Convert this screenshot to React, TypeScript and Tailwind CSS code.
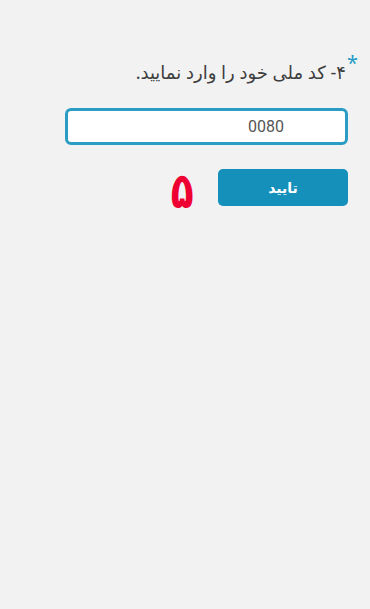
export default function App() {
  return (
    <div
      dir="rtl"
      className="min-h-[609px] w-full bg-[#f2f2f2] pt-[56px] pr-[22px] pl-[22px]"
      style={{ fontFamily: '"Noto Sans", "DejaVu Sans", sans-serif' }}
    >
      <div className="-mr-[10px] flex items-start text-[18px] leading-[26px] text-[#3d3d3d]">
        <span className="text-[#1e9bc6] text-[20px] leading-[14px] ml-[1px]">*</span>
        <span className="mt-[3px]">۴- کد ملی خود را وارد نمایید.</span>
      </div>

      <div className="mt-[23px] flex h-[37px] w-[283px] items-center rounded-[6px] border-[3px] border-[#2b9cc4] bg-white pr-[61px]">
        <span className="text-[16px] text-[#555]" style={{ fontFamily: 'Roboto, sans-serif' }}>
          0080
        </span>
      </div>

      <div className="mt-[24px] flex items-start">
        <button className="flex h-[37px] w-[130px] items-center justify-center rounded-[5px] bg-[#1490bb] text-[14px] font-bold text-white">
          تایید
        </button>
        <span className="mr-[20px] -mt-[5px] text-[50px] font-black leading-none text-[#ee0033] scale-x-75">۵</span>
      </div>
    </div>
  );
}
